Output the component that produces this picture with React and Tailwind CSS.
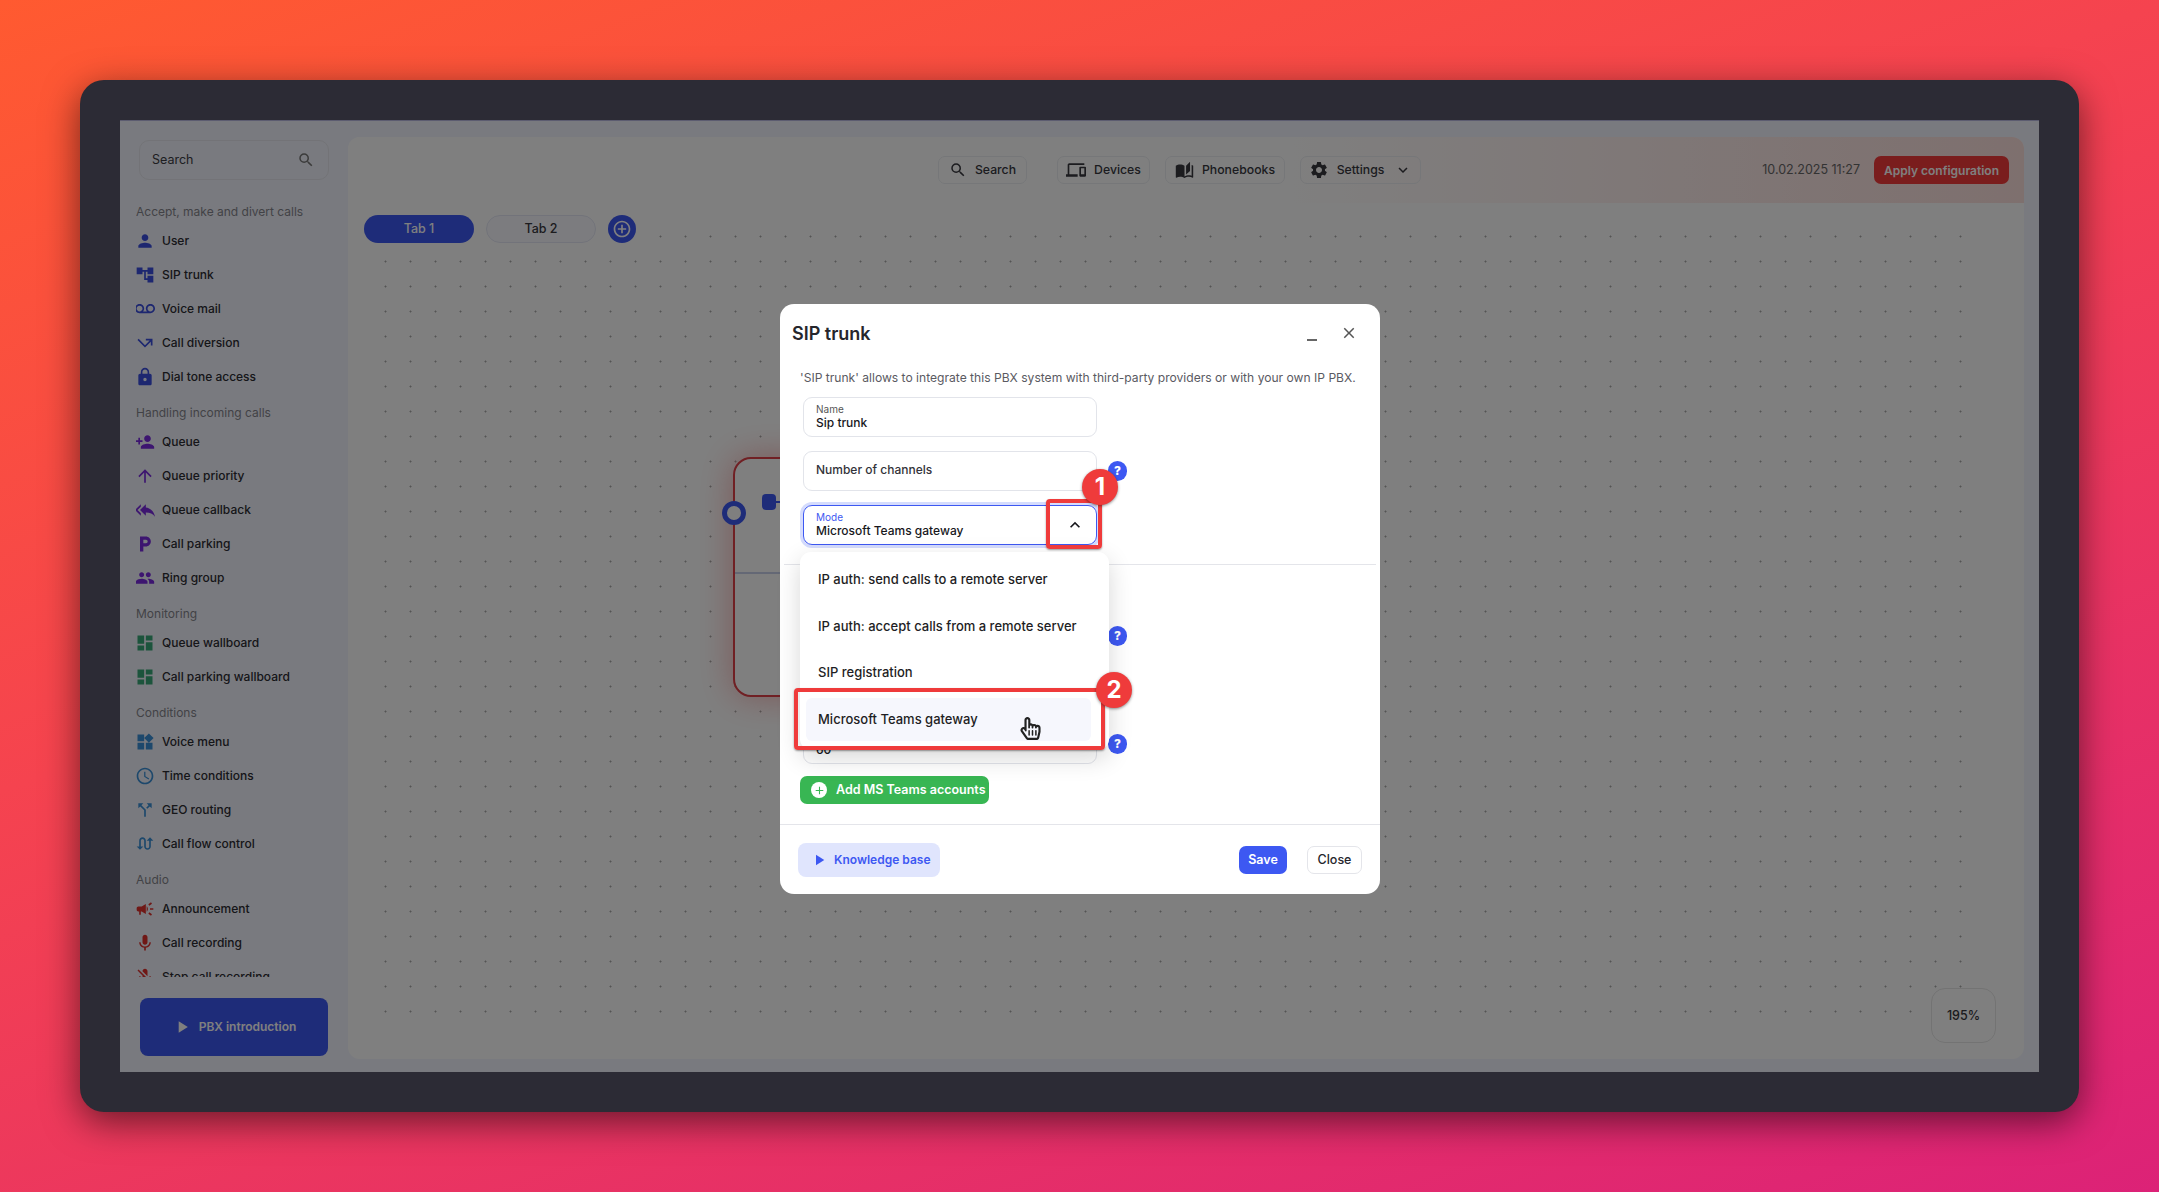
import React from "react";
import {
  MdPerson,
  MdAccountTree,
  MdVoicemail,
  MdCallMissedOutgoing,
  MdLock,
  MdPersonAdd,
  MdArrowUpward,
  MdReplyAll,
  MdLocalParking,
  MdPeople,
  MdDashboard,
  MdWidgets,
  MdAccessTime,
  MdCallSplit,
  MdSwapCalls,
  MdCampaign,
  MdMic,
  MdMicOff,
  MdSearch,
  MdDevices,
  MdAutoStories,
  MdSettings,
  MdKeyboardArrowDown,
  MdKeyboardArrowUp,
  MdAddCircleOutline,
  MdPlayArrow,
  MdClose,
  MdAdd,
} from "react-icons/md";
import { FaRegHandPointer } from "react-icons/fa";

const BLUE = "text-[#3a4ee0]";
const PURPLE = "text-[#7a2be0]";
const GREEN = "text-[#38a878]";
const SKY = "text-[#3a90d8]";
const RED = "text-[#e0302c]";

const sections = [
  {
    title: "Accept, make and divert calls",
    items: [
      ["User", MdPerson, BLUE],
      ["SIP trunk", MdAccountTree, BLUE],
      ["Voice mail", MdVoicemail, BLUE],
      ["Call diversion", MdCallMissedOutgoing, BLUE],
      ["Dial tone access", MdLock, BLUE],
    ],
  },
  {
    title: "Handling incoming calls",
    items: [
      ["Queue", MdPersonAdd, PURPLE],
      ["Queue priority", MdArrowUpward, PURPLE],
      ["Queue callback", MdReplyAll, PURPLE],
      ["Call parking", MdLocalParking, PURPLE],
      ["Ring group", MdPeople, PURPLE],
    ],
  },
  {
    title: "Monitoring",
    items: [
      ["Queue wallboard", MdDashboard, GREEN],
      ["Call parking wallboard", MdDashboard, GREEN],
    ],
  },
  {
    title: "Conditions",
    items: [
      ["Voice menu", MdWidgets, SKY],
      ["Time conditions", MdAccessTime, SKY],
      ["GEO routing", MdCallSplit, SKY],
      ["Call flow control", MdSwapCalls, SKY],
    ],
  },
  {
    title: "Audio",
    items: [
      ["Announcement", MdCampaign, RED],
      ["Call recording", MdMic, RED],
      ["Stop call recording", MdMicOff, RED],
    ],
  },
];

function Sidebar() {
  return (
    <aside className="flex h-full w-[228px] shrink-0 flex-col pl-[16px] pt-[20px]">
      <div className="ml-[3px] flex h-[40px] w-[190px] shrink-0 items-center justify-between rounded-[10px] border border-[#e6e7ee] pl-[12px] pr-[13px]">
        <span className="text-[12.5px] text-[#3c3c44]">Search</span>
        <MdSearch size={18} className="text-[#777]" />
      </div>
      <div className="mt-[13px] h-[784px] overflow-hidden">
        {sections.map((s) => (
          <div key={s.title}>
            <div className="h-[31px] pt-[10px] text-[12px] leading-[18px] text-[#85858d]">
              {s.title}
            </div>
            {s.items.map(([label, Icon, color]) => (
              <div key={label} className="flex h-[34px] items-center">
                <span className="-ml-px mr-[7px] flex w-[20px] justify-center">
                  <Icon size={20} className={color} />
                </span>
                <span className="text-[12px] font-medium text-[#2c2c33]">
                  {label}
                </span>
              </div>
            ))}
          </div>
        ))}
      </div>
      <div className="ml-[4px] mt-[21px] flex h-[58px] w-[188px] shrink-0 items-center justify-center gap-[7px] rounded-[8px] bg-[#3d58f2] text-[12px] font-semibold text-white">
        <MdPlayArrow size={20} />
        PBX introduction
      </div>
    </aside>
  );
}

function HeaderButton({ width, icon, label, chevron }) {
  return (
    <div
      className={`flex h-[28px] items-center justify-center gap-[8px] rounded-[7px] border border-[#eceef2] text-[12.25px] font-medium text-[#38383f] ${width}`}
    >
      {icon}
      <span className="pt-[1px]">{label}</span>
      {chevron && <MdKeyboardArrowDown size={18} className="ml-[2px]" />}
    </div>
  );
}

function Canvas() {
  return (
    <main className="relative mb-[13px] mr-[15px] mt-[17px] flex-1 overflow-hidden rounded-[12px] bg-white">
      <div className="absolute bottom-[35px] left-[25px] right-[51px] top-[87px] bg-[radial-gradient(circle,#a8a8a8_0.9px,transparent_1.1px)] bg-size-[25px_25px]" />

      <div className="relative z-10 flex h-[66px] items-center bg-[linear-gradient(90deg,#ffffff_55%,#fde0dd_100%)] pr-[15px] pl-[590px]">
        <HeaderButton
          width="w-[89px]"
          icon={<MdSearch size={18} />}
          label="Search"
        />
        <div className="ml-[30px] flex gap-[15px]">
          <HeaderButton
            width="w-[93px]"
            icon={<MdDevices size={20} />}
            label="Devices"
          />
          <HeaderButton
            width="w-[120px]"
            icon={<MdAutoStories size={19} />}
            label="Phonebooks"
          />
          <HeaderButton
            width="w-[121px]"
            icon={<MdSettings size={20} />}
            label="Settings"
            chevron
          />
        </div>
        <span className="ml-auto pt-[1px] text-[12.5px] text-[#666]">
          10.02.2025 11:27
        </span>
        <div className="ml-[14px] flex h-[28px] w-[135px] items-center justify-center rounded-[7px] bg-[#f53a3a] pt-[1px] text-[12px] font-semibold text-white">
          Apply configuration
        </div>
      </div>

      <div className="relative z-10 mt-[12px] flex w-fit items-center gap-[12px] bg-white pb-[4px] pl-[16px] pr-[8px]">
        <div className="flex h-[28px] w-[110px] items-center justify-center rounded-full bg-[#3d58f2] pt-[1px] text-[12.5px] font-medium text-white">
          Tab 1
        </div>
        <div className="flex h-[28px] w-[110px] items-center justify-center rounded-full border border-[#e4e6f4] bg-[#f8f9fe] pt-[1px] text-[12.5px] font-medium text-[#38383f]">
          Tab 2
        </div>
        <div className="flex h-[28px] w-[28px] items-center justify-center rounded-full bg-[#3d58f2] text-white">
          <MdAddCircleOutline size={20} />
        </div>
      </div>

      {/* node on the diagram, mostly behind the dialog */}
      <div className="absolute left-[385px] top-[320px] h-[240px] w-[420px] rounded-[18px] border-2 border-[#e04048] bg-white shadow-[0_0_34px_rgba(240,60,60,0.4)]">
        <div className="absolute left-0 right-0 top-[113px] h-[2px] bg-[#c8d0ea]" />
        <div className="absolute -left-[13px] top-[42px] h-[24px] w-[24px] rounded-full border-[5px] border-[#3d58f2] bg-white" />
        <div className="absolute left-[27px] top-[35px] h-[16px] w-[14px] rounded-[4px] bg-[#3d58f2]" />
        <div className="absolute left-[40px] top-[42px] h-[2px] w-[8px] bg-[#3d58f2]" />
      </div>

      <div className="absolute bottom-[16px] right-[28px] flex h-[55px] w-[65px] items-center justify-center rounded-[14px] border border-[#e6e6e6] bg-white pt-[2px] text-[12.5px] font-medium text-[#38383f]">
        195%
      </div>
    </main>
  );
}

function Help() {
  return (
    <span className="flex h-[20px] w-[19px] items-center justify-center rounded-full bg-[#3d58f2] text-[12px] font-extrabold text-white">
      ?
    </span>
  );
}

function Field({ label, value, help, active }) {
  return (
    <div className="flex items-center gap-[11px]">
      <div
        className={
          active
            ? "flex h-[40px] w-[294px] flex-col justify-center rounded-[9px] border border-[#3d58f2] px-[12px] ring-[3px] ring-[#d5dcfd]"
            : "flex h-[40px] w-[294px] flex-col justify-center rounded-[9px] border border-[#e2e4ea] px-[12px]"
        }
      >
        {label && (
          <span
            className={`text-[10px] leading-[12px] ${active ? "text-[#3d58f2]" : "text-[#555]"}`}
          >
            {label}
          </span>
        )}
        {value && (
          <span className="text-[12px] font-medium leading-[16px] text-[#17171c]">
            {value}
          </span>
        )}
      </div>
      {help && <Help />}
    </div>
  );
}

function Dialog() {
  return (
    <div className="absolute left-[660px] top-[184px] z-30 flex h-[590px] w-[600px] flex-col rounded-[14px] bg-white">
      <div className="flex h-[58px] shrink-0 items-center justify-between pl-[12px] pr-[22px]">
        <h1 className="text-[18px] font-semibold text-[#26262c]">SIP trunk</h1>
        <div className="flex items-center gap-[23px] text-[#555]">
          <span className="mt-[14px] h-[2px] w-[10px] bg-[#666]" />
          <MdClose size={18} />
        </div>
      </div>
      <p className="mt-[7px] pl-[20px] text-[12.1px] leading-[18px] text-[#5a5a62]">
        'SIP trunk' allows to integrate this PBX system with third-party
        providers or with your own IP PBX.
      </p>
      <div className="mt-[10px] flex flex-col gap-[14px] pl-[23px]">
        <Field label="Name" value="Sip trunk" />
        <div className="flex items-center gap-[11px]">
          <div className="flex h-[40px] w-[294px] items-center rounded-[9px] border border-[#e2e4ea] px-[12px] pb-[2px] text-[12px] font-medium text-[#33333a]">
            Number of channels
          </div>
          <Help />
        </div>
        <div className="relative w-[294px]">
          <Field label="Mode" value="Microsoft Teams gateway" active />
          <MdKeyboardArrowUp
            size={20}
            className="absolute right-[12px] top-[10px] text-[#17171c]"
          />
        </div>
      </div>
      <div className="mx-[4px] mt-[19px] h-px bg-[#e4e5ea]" />
      <div className="flex flex-col gap-[14px] pl-[23px] pt-[51px]">
        <Field help />
        <Field />
        <Field label={"\u00a0"} value="60" help />
      </div>
      <div className="ml-[20px] mt-[12px] flex h-[28px] w-[189px] items-center gap-[9px] rounded-[7px] bg-[#38b653] pl-[11px] text-[12.5px] font-semibold text-white">
        <span className="flex h-[16px] w-[16px] items-center justify-center rounded-full bg-white text-[#38b653]">
          <MdAdd size={13} />
        </span>
        Add MS Teams accounts
      </div>
      <div className="mt-[20px] h-px bg-[#e4e5ea]" />
      <div className="flex flex-1 items-center pl-[18px] pr-[18px]">
        <div className="flex h-[34px] w-[142px] items-center gap-[6px] rounded-[8px] bg-[#e0e5fd] pl-[12px] text-[12px] font-semibold text-[#3d58f2]">
          <MdPlayArrow size={18} />
          Knowledge base
        </div>
        <div className="ml-auto flex h-[28px] w-[48px] items-center justify-center rounded-[7px] bg-[#3d58f2] pt-[1px] text-[12.5px] font-semibold text-white">
          Save
        </div>
        <div className="ml-[20px] flex h-[28px] w-[55px] items-center justify-center rounded-[7px] border border-[#e4e5ea] pt-[1px] text-[12.5px] font-medium text-[#26262c]">
          Close
        </div>
      </div>
    </div>
  );
}

const modes = [
  "IP auth: send calls to a remote server",
  "IP auth: accept calls from a remote server",
  "SIP registration",
  "Microsoft Teams gateway",
];

function ModeMenu() {
  return (
    <div className="absolute left-[680px] top-[432px] z-40 flex h-[198px] w-[309px] flex-col gap-[3.6px] rounded-[11px] bg-white pb-[6px] pl-[6px] pr-[18px] pt-[6.5px] shadow-[0_8px_24px_rgba(0,0,0,0.16)]">
      {modes.map((m, i) => (
        <div
          key={m}
          className={`flex h-[43px] shrink-0 items-center rounded-[6px] pl-[12px] text-[13px] font-medium text-[#1e1e24] ${i === 3 ? "bg-[#f6f7fd]" : ""}`}
        >
          {m}
        </div>
      ))}
    </div>
  );
}

function Badge({ n, className }) {
  return (
    <div
      className={`absolute z-50 flex h-[36px] w-[36px] items-center justify-center rounded-full bg-[#ef3b3b] text-[24px] font-bold text-white shadow-[0_1px_3px_rgba(0,0,0,0.45)] ${className}`}
    >
      {n}
    </div>
  );
}

export default function App() {
  return (
    <div className="h-[1192px] w-[2159px] overflow-hidden bg-[linear-gradient(160deg,#ff5a30_0%,#f5434f_40%,#dc2277_100%)] p-[80px] font-['Inter',sans-serif]">
      <div className="h-[1032px] w-[1999px] rounded-[24px] bg-[#2c2b35] p-[40px] shadow-[0_10px_36px_rgba(0,0,0,0.55)]">
        <div className="relative flex h-[952px] w-[1919px] bg-[#f3f5fe]">
          <Sidebar />
          <Canvas />
          <div className="absolute inset-0 z-20 border-t border-[#5c5c70] bg-black/50" />
          <Dialog />
          <ModeMenu />
          <div className="absolute left-[926px] top-[379px] z-50 h-[50px] w-[56px] rounded-[4px] border-[4px] border-[#ef3b3b] shadow-[0_1px_2px_rgba(0,0,0,0.4)]" />
          <div className="absolute left-[674px] top-[568px] z-50 h-[62px] w-[311px] rounded-[4px] border-[4px] border-[#ef3b3b] shadow-[0_1px_2px_rgba(0,0,0,0.4)]" />
          <Badge n="1" className="left-[962px] top-[349px]" />
          <Badge n="2" className="left-[976px] top-[552px]" />
          <FaRegHandPointer
            size={23}
            className="absolute left-[899px] top-[597px] z-50 text-[#222]"
          />
        </div>
      </div>
    </div>
  );
}
